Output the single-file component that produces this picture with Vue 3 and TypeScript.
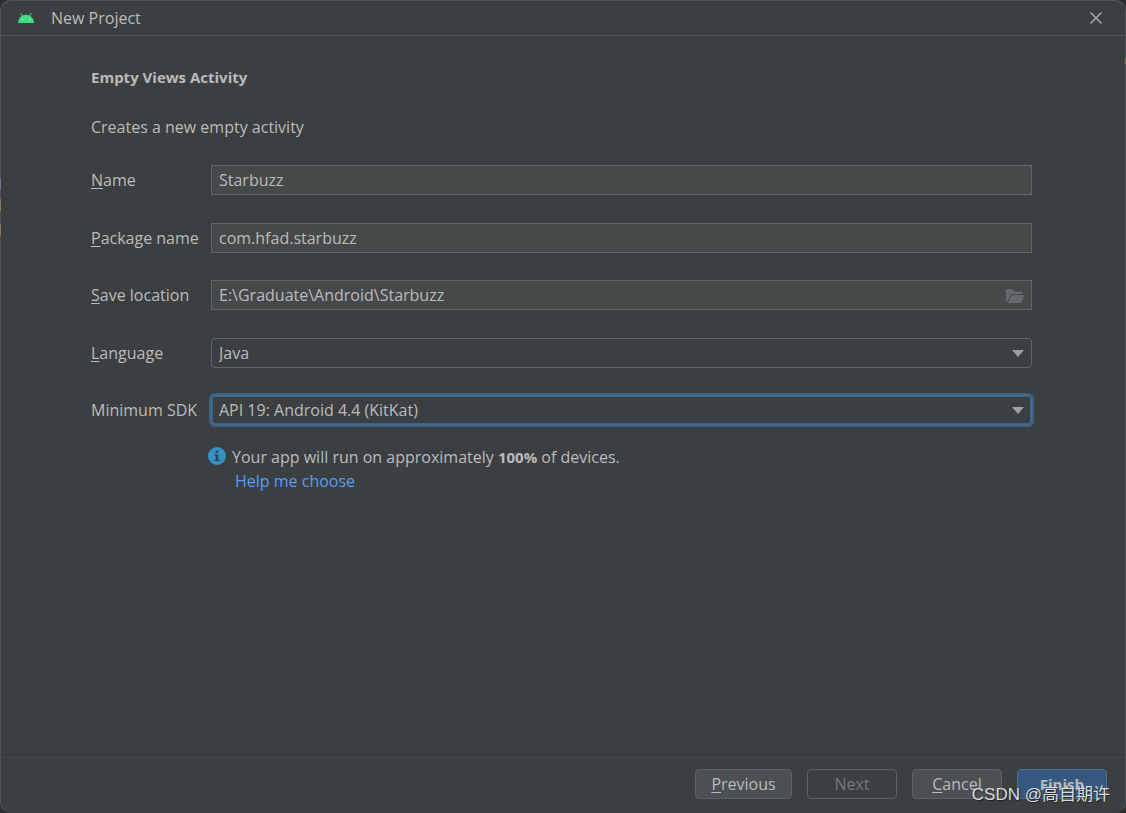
<script setup lang="ts">
import { ref } from 'vue'

interface TextField {
  id: string
  mnemonic: string
  rest: string
  browse: boolean
}

const textFields: TextField[] = [
  { id: 'name', mnemonic: 'N', rest: 'ame', browse: false },
  { id: 'package', mnemonic: 'P', rest: 'ackage name', browse: false },
  { id: 'location', mnemonic: 'S', rest: 'ave location', browse: true },
]

const values = ref<Record<string, string>>({
  name: 'Starbuzz',
  package: 'com.hfad.starbuzz',
  location: 'E:\\Graduate\\Android\\Starbuzz',
})

const language = ref('Java')
const minimumSdk = ref('API 19: Android 4.4 (KitKat)')
</script>

<template>
  <div class="desktop">
    <main class="dialog">
      <header class="titlebar">
        <svg class="android" viewBox="0 0 16 10" aria-hidden="true">
          <path d="M2.800 .4 4.800 3.800M13.200 .4 11.200 3.800" stroke="#3ddc84" stroke-width="1" stroke-linecap="round" />
          <path d="M0 10C.3 5 3.600 1.800 8 1.800S15.700 5 16 10Z" fill="#3ddc84" />
          <circle cx="4.500" cy="6.700" r=".8" fill="#b9f3d2" />
          <circle cx="11.500" cy="6.700" r=".8" fill="#b9f3d2" />
        </svg>
        <span class="caption">New Project</span>
        <button class="close" type="button" aria-label="Close">
          <svg viewBox="0 0 12 12" aria-hidden="true">
            <path d="M.5.5 11.500 11.500M11.500.5.5 11.500" stroke="#b4b5b6" stroke-width="1.200" />
          </svg>
        </button>
      </header>

      <section class="content">
        <h1>Empty Views Activity</h1>
        <p class="summary">Creates a new empty activity</p>

        <form class="form">
          <div v-for="field in textFields" :key="field.id" class="row">
            <label :for="field.id"><u>{{ field.mnemonic }}</u>{{ field.rest }}</label>
            <div class="control">
              <input :id="field.id" v-model="values[field.id]" type="text" spellcheck="false" />
              <button v-if="field.browse" class="browse" type="button" aria-label="Browse">
                <svg viewBox="0 0 19 14" aria-hidden="true">
                  <path d="M0 0H6.500L8.500 2.500H16.500V5H5L1 13H0Z" fill="#626a6e" />
                  <path d="M5.700 6H19L15 14H1.500Z" fill="#626a6e" />
                </svg>
              </button>
            </div>
          </div>
          <div class="row">
            <label for="language"><u>L</u>anguage</label>
            <div class="control">
              <select id="language" v-model="language">
                <option>Java</option>
                <option>Kotlin</option>
              </select>
              <svg class="arrow" viewBox="0 0 12 7" aria-hidden="true"><path d="M0 0H12L6 7Z" fill="#9da1a4" /></svg>
            </div>
          </div>
          <div class="row">
            <label for="sdk">Minimum SDK</label>
            <div class="control">
              <select id="sdk" v-model="minimumSdk" class="active">
                <option>API 19: Android 4.4 (KitKat)</option>
              </select>
              <svg class="arrow" viewBox="0 0 12 7" aria-hidden="true"><path d="M0 0H12L6 7Z" fill="#9da1a4" /></svg>
            </div>
          </div>
        </form>

        <div class="hint">
          <svg class="info" viewBox="0 0 18 18" aria-hidden="true">
            <circle cx="9" cy="9" r="9" fill="#3592c4" />
            <path d="M7.700 3.500H10.300V6H7.700ZM6.500 7.300H10.300V12.700H11.500V14.200H6.500V12.700H7.700V8.800H6.500Z" fill="#2f4654" />
          </svg>
          <div>
            <p>Your app will run on approximately <b>100%</b> of devices.</p>
            <a href="#help">Help me choose</a>
          </div>
        </div>
      </section>

      <footer class="actions">
        <button type="button" class="wide"><u>P</u>revious</button>
        <button type="button" disabled>Next</button>
        <button type="button"><u>C</u>ancel</button>
        <button type="button" class="primary">Finish</button>
      </footer>
    </main>
    <i class="sliver first"></i>
    <i class="sliver second"></i>
    <i class="sliver third"></i>
    <i class="sliver right"></i>
    <span class="watermark">CSDN @高自期许</span>
  </div>
</template>

<style>
body {
  background: #2b2d2f;
}
</style>

<style scoped>
* {
  box-sizing: border-box;
}

.desktop {
  position: relative;
  min-height: 100vh;
  display: flex;
  color: #bbbbbb;
  font: 16px/24px "Open Sans", "Noto Sans", sans-serif;
}

.dialog {
  flex: 1;
  display: flex;
  flex-direction: column;
  background: #3c3f41;
  border: 1px solid #505355;
  border-bottom-color: #3c3f41;
  border-radius: 10px;
}

.titlebar {
  display: flex;
  align-items: center;
  height: 35px;
  padding: 0 23px 0 17px;
  border-bottom: 1px solid #515456;
}

.android {
  width: 16px;
  height: 10px;
}

.caption {
  flex: 1;
  margin-left: 17px;
}

button {
  font: inherit;
  color: inherit;
  padding: 0;
}

.close {
  display: flex;
  border: 0;
  background: none;
}

.close svg {
  width: 12px;
  height: 12px;
}

.content {
  flex: 1;
  padding: 29px 93px 0 90px;
}

h1,
p {
  margin: 0;
}

h1,
b,
.actions .primary {
  font-size: 15px;
  font-weight: 700;
}

.summary {
  margin-top: 26px;
}

.form {
  display: flex;
  flex-direction: column;
  justify-content: space-between;
  height: 260px;
  margin-top: 26px;
}

.row {
  display: grid;
  grid-template-columns: 120px 1fr;
  align-items: center;
  height: 30px;
}

u {
  text-underline-offset: 2px;
  text-decoration-thickness: 1px;
}

.control {
  position: relative;
  height: 30px;
}

input,
select {
  display: block;
  width: 100%;
  height: 30px;
  padding: 0 7px;
  color: inherit;
  font: inherit;
  outline: 0;
}

input {
  background: #45494a;
  border: 1px solid #646464;
}

select {
  appearance: none;
  background: #3c3f41;
  border: 1px solid #646464;
  border-radius: 4px;
}

select.active {
  border-color: #466d94;
  box-shadow: 0 0 0 2px #3d6185, inset 0 0 0 1px #3d6185;
}

.browse {
  position: absolute;
  top: 9px;
  right: 7px;
  display: flex;
  border: 0;
  background: none;
}

.browse svg {
  width: 19px;
  height: 14px;
}

.arrow {
  position: absolute;
  top: 12px;
  right: 8px;
  width: 12px;
  height: 7px;
  pointer-events: none;
}

.hint {
  display: flex;
  gap: 6px;
  margin: 20px 0 0 117px;
}

.info {
  width: 18px;
  height: 18px;
  margin-top: 2px;
}

.hint a {
  display: block;
  margin-left: 3px;
  color: #589df6;
  text-decoration: none;
}

.actions {
  display: flex;
  justify-content: flex-end;
  gap: 15px;
  padding: 14px 18px 13px;
  border-top: 1px solid #323537;
}

.actions button {
  width: 90px;
  height: 30px;
  background: #4c5052;
  border: 1px solid #5e6060;
  border-radius: 4px;
}

.actions .wide {
  width: 97px;
}

.actions button:disabled {
  background: #3c3f41;
  color: #777777;
}

.actions .primary {
  background: #365880;
  border-color: #4c708c;
}

.sliver {
  position: absolute;
  left: 0;
  width: 1px;
  height: 12px;
  background: #927556;
}

.first {
  top: 178px;
  background: #62718c;
}

.second {
  top: 199px;
}

.third {
  top: 224px;
}

.right {
  top: 58px;
  right: 0;
  left: auto;
  height: 6px;
}

.watermark {
  position: absolute;
  right: 16px;
  bottom: 6px;
  color: #dcdcdc;
  font: 17px/24px "Liberation Sans", "Noto Sans CJK SC", sans-serif;
  text-shadow: 1px 1px 1px #222222;
  pointer-events: none;
}
</style>
